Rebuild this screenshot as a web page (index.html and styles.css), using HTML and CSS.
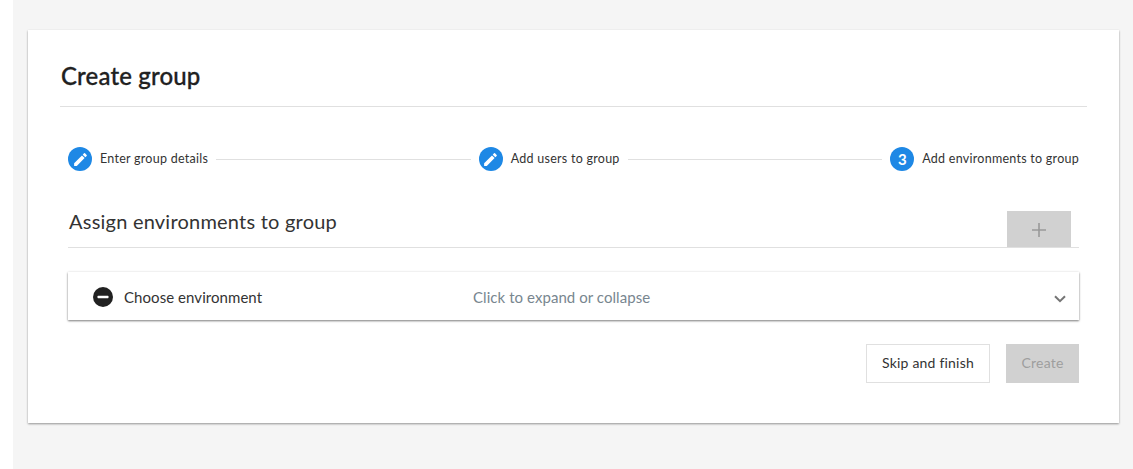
FILE: index.html
```html
<!DOCTYPE html>
<html lang="en">
<head>
<meta charset="utf-8">
<title>Create group</title>
<link rel="stylesheet" href="styles.css">
</head>
<body>
<main class="page">
  <section class="card">
    <h1 class="title">Create group</h1>
    <div class="content">
      <ol class="stepper">
        <li class="step">
          <span class="step-icon"><svg viewBox="0 0 24 24" width="17" height="17"><path fill="#fff" d="M3 17.25V21h3.75L17.81 9.94l-3.75-3.75L3 17.25zM20.71 7.04a1 1 0 0 0 0-1.41l-2.34-2.34a1 1 0 0 0-1.41 0l-1.83 1.83 3.75 3.75 1.83-1.83z"/></svg></span>
          <span class="step-label">Enter group details</span>
        </li>
        <li class="connector"></li>
        <li class="step">
          <span class="step-icon"><svg viewBox="0 0 24 24" width="17" height="17"><path fill="#fff" d="M3 17.25V21h3.75L17.81 9.94l-3.75-3.75L3 17.25zM20.71 7.04a1 1 0 0 0 0-1.41l-2.34-2.34a1 1 0 0 0-1.41 0l-1.83 1.83 3.75 3.75 1.83-1.83z"/></svg></span>
          <span class="step-label">Add users to group</span>
        </li>
        <li class="connector"></li>
        <li class="step">
          <span class="step-icon step-number">3</span>
          <span class="step-label">Add environments to group</span>
        </li>
      </ol>
      <div class="section-head">
        <h2 class="section-title">Assign environments to group</h2>
        <button class="add-btn" type="button" disabled aria-label="Add"><svg viewBox="0 0 14 14" width="14" height="14"><path fill="none" stroke="#999" stroke-width="1.6" d="M7 0v14M0 7h14"/></svg></button>
      </div>
      <div class="panel">
        <span class="panel-left">
          <svg class="minus" viewBox="0 0 20 20" width="20" height="20"><circle cx="10" cy="10" r="10" fill="#212121"/><rect x="4.5" y="8.8" width="11" height="2.4" rx="0.6" fill="#fff"/></svg>
          <span class="panel-name">Choose environment</span>
        </span>
        <span class="panel-hint">Click to expand or collapse</span>
        <svg class="chevron" viewBox="0 0 12 8" width="12" height="8"><path fill="none" stroke="#757575" stroke-width="2" d="M1 1.2l5 5 5-5"/></svg>
      </div>
      <div class="actions">
        <button class="btn btn-outline" type="button">Skip and finish</button>
        <button class="btn btn-disabled" type="button" disabled>Create</button>
      </div>
    </div>
  </section>
</main>
</body>
</html>
```
FILE: styles.css
```css
* { box-sizing: border-box; }
html, body { margin: 0; height: 100%; }
body {
  background: #fff;
  font-family: "Lato", "Noto Sans", sans-serif;
  color: #212121;
  overflow: hidden;
}
.page {
  margin-left: 13px;
  height: 469px;
  background: #f5f5f5;
  padding: 30px 14px 0 15px;
}
.card {
  height: 393px;
  background: #fff;
  padding: 0 32px;
  box-shadow: 0 1px 2px rgba(0, 0, 0, 0.4);
}
.title {
  margin: 0;
  height: 77px;
  padding: 29px 0 0 1px;
  font-size: 24px;
  line-height: 33px;
  font-weight: 500;
  letter-spacing: 0.15px;
  border-bottom: 1px solid #e0e0e0;
  -webkit-text-stroke: 0.3px #212121;
}
.content { padding: 40px 8px 0; }
.stepper {
  list-style: none;
  margin: 0;
  padding: 0;
  display: flex;
  align-items: center;
  height: 24px;
}
.step { display: flex; align-items: center; }
.step-icon {
  width: 24px;
  height: 24px;
  border-radius: 50%;
  background: #1e88e5;
  color: #fff;
  display: flex;
  align-items: center;
  justify-content: center;
  font-size: 15px;
  font-weight: 700;
}
.step-label {
  margin-left: 8px;
  font-size: 12.5px;
  line-height: 16px;
  letter-spacing: 0.26px;
  color: #333;
  white-space: nowrap;
}
.connector {
  flex: 1;
  height: 1px;
  background: #e0e0e0;
  margin: 0 8px;
}
.section-head {
  margin-top: 40px;
  height: 37px;
  display: flex;
  justify-content: space-between;
  align-items: flex-start;
  border-bottom: 1px solid #e0e0e0;
  padding-right: 8px;
}
.section-title {
  margin: 0;
  padding-left: 1px;
  font-size: 20px;
  line-height: 20px;
  font-weight: 400;
  letter-spacing: 0.22px;
  color: #333;
}
.add-btn {
  width: 64px;
  height: 36px;
  border: 0;
  padding: 2px 0 0;
  background: #d1d1d1;
  display: flex;
  align-items: center;
  justify-content: center;
}
.panel {
  margin-top: 24px;
  height: 48px;
  display: flex;
  align-items: center;
  padding: 2px 13px 0 25px;
  background: #fff;
  box-shadow: 0 1px 2px rgba(0, 0, 0, 0.5), 0 0 3px rgba(0, 0, 0, 0.06);
  font-size: 15px;
  letter-spacing: 0.06px;
}
.panel-left {
  width: 380px;
  display: flex;
  align-items: center;
  gap: 11px;
}
.panel-name { color: #333; }
.panel-hint { flex: 1; color: #78868f; }
.chevron { flex: none; margin-top: 3px; }
.actions {
  margin-top: 24px;
  display: flex;
  justify-content: flex-end;
  gap: 16px;
}
.btn {
  height: 39px;
  font-family: inherit;
  font-size: 14px;
  letter-spacing: 0.2px;
  padding: 0 0 2px;
}
.btn-outline {
  width: 124px;
  background: #fff;
  border: 1px solid #e0e0e0;
  color: #333;
}
.btn-disabled {
  width: 73px;
  background: #d1d1d1;
  border: 0;
  color: #9e9e9e;
}
```
